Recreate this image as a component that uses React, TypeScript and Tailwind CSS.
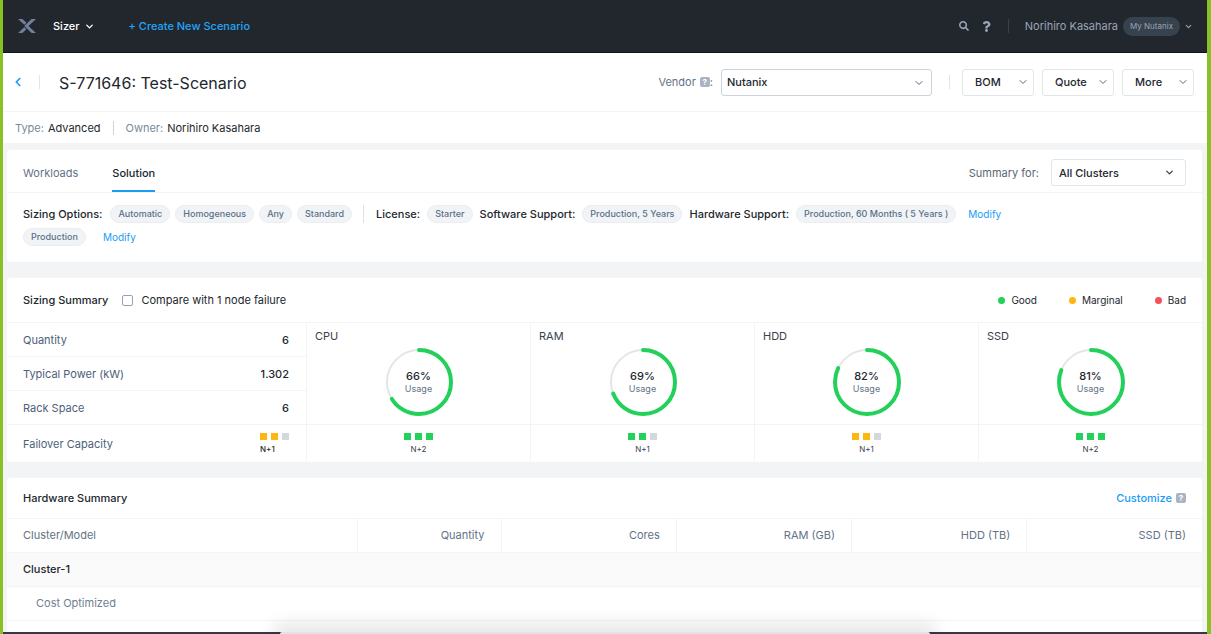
import { ChevronDown, ChevronLeft } from "lucide-react";
import { FaSearch, FaQuestion } from "react-icons/fa";

const colors = {
  good: "bg-[#22d05a]",
  marginal: "bg-[#ffb60f]",
  bad: "bg-[#f4505a]",
  off: "bg-[#d3d8de]",
};

type Level = keyof typeof colors;

const stats = [
  { label: "Quantity", value: "6" },
  { label: "Typical Power (kW)", value: "1.302" },
  { label: "Rack Space", value: "6" },
];

const gauges: { label: string; usage: number; level: Level; filled: number; failover: string }[] = [
  { label: "CPU", usage: 66, level: "good", filled: 3, failover: "N+2" },
  { label: "RAM", usage: 69, level: "good", filled: 2, failover: "N+1" },
  { label: "HDD", usage: 82, level: "marginal", filled: 2, failover: "N+1" },
  { label: "SSD", usage: 81, level: "good", filled: 3, failover: "N+2" },
];

const legend: { label: string; level: Level }[] = [
  { label: "Good", level: "good" },
  { label: "Marginal", level: "marginal" },
  { label: "Bad", level: "bad" },
];

const columns = ["Quantity", "Cores", "RAM (GB)", "HDD (TB)", "SSD (TB)"];

function Logo() {
  return (
    <svg width="18" height="14" viewBox="0 0 18 14" fill="#71819a" aria-hidden="true">
      <path d="M0 0h4.400l4 3.700-2.100 2z" />
      <path d="M18 0h-4.400L6.200 7l7.400 7H18l-7.500-7z" />
      <path d="M0 14h4.400l4-3.700-2.100-2z" />
    </svg>
  );
}

function HelpBadge() {
  return (
    <span className="inline-flex h-[10px] w-[10px] items-center justify-center rounded-xs bg-[#a9b4c2] text-[8px] font-bold leading-none text-white">
      ?
    </span>
  );
}

function Chip({ children }: { children: string }) {
  return (
    <span className="flex h-[18px] items-center whitespace-nowrap rounded-full border border-[#ebeef1] bg-[#f1f4f6] px-[7px] text-[9px] font-medium text-[#5c6f87]">
      {children}
    </span>
  );
}

function Blocks({ level, filled }: { level: Level; filled: number }) {
  return (
    <div className="flex gap-1">
      {[0, 1, 2].map((i) => (
        <span key={i} className={`h-[7px] w-[7px] ${i < filled ? colors[level] : colors.off}`} />
      ))}
    </div>
  );
}

function Gauge({ usage }: { usage: number }) {
  const r = 32;
  const length = 2 * Math.PI * r;
  return (
    <div className="relative h-[68px] w-[68px]">
      <svg viewBox="0 0 68 68" className="h-full w-full -rotate-90" fill="none" aria-hidden="true">
        <circle cx="34" cy="34" r={r} stroke="#e4e5e7" strokeWidth="2" />
        <circle
          cx="34"
          cy="34"
          r={r}
          stroke="#22d05a"
          strokeWidth="4"
          strokeLinecap="round"
          strokeDasharray={`${(length * usage) / 100} ${length}`}
        />
      </svg>
      <div className="absolute inset-0 flex flex-col items-center justify-center">
        <span className="text-[11px] font-medium leading-[14px] text-[#22272e]">{usage}%</span>
        <span className="text-[9px] leading-[12px] text-[#627386]">Usage</span>
      </div>
    </div>
  );
}

function MenuButton({ label }: { label: string }) {
  return (
    <button className="flex h-[27px] w-[72px] items-center justify-between rounded-[3px] border border-[#e2e5e8] pl-3 pr-1 text-[11px] font-medium">
      {label}
      <ChevronDown size={12} className="text-[#5b6673]" />
    </button>
  );
}

export default function App() {
  return (
    <div className="flex min-h-screen flex-col border-l-[3px] border-r-4 border-[#8ac122] bg-[#f2f4f6] font-['Inter',sans-serif] text-[11px] leading-4 text-[#22272e]">
      <header className="flex h-[53px] items-center border-b border-[#11151c] bg-[#22272e] pl-[15px] pr-[14px]">
        <Logo />
        <button className="ml-[17px] flex items-center gap-1 font-medium text-white">
          Sizer
          <ChevronDown size={11} strokeWidth={3} />
        </button>
        <a href="#new" className="ml-[34px] font-medium text-[#22a5f7]">
          + Create New Scenario
        </a>
        <div className="ml-auto flex items-center text-[#9aa5b5]">
          <button aria-label="Search">
            <FaSearch size={10} />
          </button>
          <button aria-label="Help" className="ml-3">
            <FaQuestion size={11} />
          </button>
          <span className="mx-4 h-[14px] w-px bg-[#3a414b]" />
          <span>Norihiro Kasahara</span>
          <span className="ml-[5px] flex h-[19px] items-center rounded-full bg-[#36424d] px-[7px] text-[8px]">My Nutanix</span>
          <button aria-label="Account menu" className="ml-1">
            <ChevronDown size={9} strokeWidth={3} />
          </button>
        </div>
      </header>

      <section className="bg-white">
        <div className="flex h-[59px] items-center border-b border-[#f2f4f6] pl-2 pr-[13px]">
          <button aria-label="Back" className="text-[#1b9cf5]">
            <ChevronLeft size={14} strokeWidth={3} />
          </button>
          <span className="ml-[14px] h-[14px] w-px bg-[#e2e5e8]" />
          <h1 className="ml-[19px] pt-[2px] text-[16px] leading-6">S-771646: Test-Scenario</h1>
          <div className="ml-auto flex items-center">
            <label htmlFor="vendor" className="flex items-center text-[#627386]">
              Vendor
              <span className="ml-1 flex items-center">
                <HelpBadge />:
              </span>
            </label>
            <div className="relative ml-2">
              <select id="vendor" className="h-[27px] w-[211px] appearance-none rounded-[3px] border border-[#cdd3dc] bg-white pl-[5px] font-medium">
                <option>Nutanix</option>
              </select>
              <ChevronDown size={12} className="pointer-events-none absolute right-[7px] top-2 text-[#5b6673]" />
            </div>
            <span className="ml-[17px] mr-3 h-[14px] w-px bg-[#e2e5e8]" />
            <div className="flex gap-2">
              <MenuButton label="BOM" />
              <MenuButton label="Quote" />
              <MenuButton label="More" />
            </div>
          </div>
        </div>
        <div className="flex h-[31px] items-center pl-3">
          <span className="text-[#7b899a]">Type:</span>
          <span className="ml-1">Advanced</span>
          <span className="mx-3 h-[14px] w-px bg-[#cdd3dc]" />
          <span className="text-[#7b899a]">Owner:</span>
          <span className="ml-1">Norihiro Kasahara</span>
        </div>
      </section>

      <main className="flex flex-1 flex-col gap-4 pl-1 pr-[5px] pt-[7px]">
        <section className="rounded-[3px] bg-white">
          <div className="flex h-[43px] items-stretch border-b border-[#f2f4f6] px-4">
            <nav className="flex gap-[34px]">
              <a href="#workloads" className="flex items-center border-b-2 border-transparent pt-[5px] text-[#627386]">
                Workloads
              </a>
              <a href="#solution" className="flex items-center border-b-2 border-[#1b9cf5] pt-[5px] font-medium">
                Solution
              </a>
            </nav>
            <div className="ml-auto flex items-center gap-3 pt-[3px]">
              <label htmlFor="clusters" className="text-[#5b6673]">
                Summary for:
              </label>
              <div className="relative">
                <select id="clusters" className="h-[27px] w-[135px] appearance-none rounded-[3px] border border-[#e2e5e8] bg-white pl-[7px] font-medium">
                  <option>All Clusters</option>
                </select>
                <ChevronDown size={11} strokeWidth={3} className="pointer-events-none absolute right-[11px] top-2 text-[#38414d]" />
              </div>
            </div>
          </div>
          <div className="flex items-start px-4 pb-4 pt-3">
            <div className="flex w-[340px] flex-wrap items-center gap-x-[5px] gap-y-[5px]">
              <span className="mr-[3px] font-medium">Sizing Options:</span>
              <Chip>Automatic</Chip>
              <Chip>Homogeneous</Chip>
              <Chip>Any</Chip>
              <Chip>Standard</Chip>
              <Chip>Production</Chip>
              <a href="#sizing" className="ml-3 text-[10px] text-[#1b9cf5]">
                Modify
              </a>
            </div>
            <div className="flex items-center border-l border-[#dde2e8] pl-3">
              <span className="font-medium">License:</span>
              <div className="mx-[7px]">
                <Chip>Starter</Chip>
              </div>
              <span className="font-medium">Software Support:</span>
              <div className="mx-[7px]">
                <Chip>Production, 5 Years</Chip>
              </div>
              <span className="font-medium">Hardware Support:</span>
              <div className="ml-[7px] mr-3">
                <Chip>Production, 60 Months ( 5 Years )</Chip>
              </div>
              <a href="#support" className="text-[10px] text-[#1b9cf5]">
                Modify
              </a>
            </div>
          </div>
        </section>

        <section className="rounded-[3px] bg-white">
          <div className="flex h-[45px] items-center border-b border-[#f2f4f6] px-4">
            <h2 className="font-medium">Sizing Summary</h2>
            <label className="ml-[14px] flex items-center gap-2">
              <input type="checkbox" className="h-[11px] w-[11px] appearance-none rounded-xs border border-[#94a3b5] bg-white" />
              Compare with 1 node failure
            </label>
            <ul className="ml-auto flex gap-8 text-[10px]">
              {legend.map((item) => (
                <li key={item.label} className="flex items-center gap-[6px]">
                  <span className={`h-[7px] w-[7px] rounded-full ${colors[item.level]}`} />
                  {item.label}
                </li>
              ))}
            </ul>
          </div>
          <div className="flex">
            <div className="flex w-[299px] shrink-0 flex-col">
              {stats.map((stat) => (
                <div key={stat.label} className="flex h-[34px] items-center justify-between border-b border-[#f2f4f6] pl-4 pr-[17px]">
                  <span className="text-[#4d6078]">{stat.label}</span>
                  <span className="font-medium">{stat.value}</span>
                </div>
              ))}
              <div className="flex h-[37px] items-center justify-between pl-4 pr-[17px]">
                <span className="text-[#4d6078]">Failover Capacity</span>
                <div>
                  <Blocks level="marginal" filled={2} />
                  <span className="mt-1 block text-[8px] font-medium leading-[10px]">N+1</span>
                </div>
              </div>
            </div>
            <div className="grid flex-1 grid-cols-4">
              {gauges.map((gauge) => (
                <div key={gauge.label} className="border-l border-[#f2f4f6]">
                  <div className="flex h-[102px] flex-col border-b border-[#f2f4f6] pt-[5px]">
                    <h3 className="ml-2 text-[#3a424d]">{gauge.label}</h3>
                    <div className="mt-1 flex justify-center">
                      <Gauge usage={gauge.usage} />
                    </div>
                  </div>
                  <div className="flex h-[37px] flex-col items-center justify-center">
                    <Blocks level={gauge.level} filled={gauge.filled} />
                    <span className="mt-1 text-[8px] leading-[10px] text-[#3a424d]">{gauge.failover}</span>
                  </div>
                </div>
              ))}
            </div>
          </div>
        </section>

        <section className="flex-1 rounded-t-[3px] bg-white">
          <div className="flex h-[41px] items-center justify-between border-b border-[#f2f4f6] px-4">
            <h2 className="font-medium">Hardware Summary</h2>
            <div className="flex items-center gap-1">
              <a href="#customize" className="font-medium text-[#1b9cf5]">
                Customize
              </a>
              <HelpBadge />
            </div>
          </div>
          <table className="w-full table-fixed">
            <colgroup>
              <col className="w-[350px]" />
              <col className="w-[144px]" />
              <col />
              <col />
              <col />
              <col />
            </colgroup>
            <thead>
              <tr className="h-[33px] border-b border-[#f2f4f6] text-[#627386]">
                <th className="pl-4 text-left font-normal">Cluster/Model</th>
                {columns.map((column) => (
                  <th key={column} className="border-l border-[#f2f4f6] pr-4 text-right font-normal">
                    {column}
                  </th>
                ))}
              </tr>
            </thead>
            <tbody>
              <tr className="h-[34px] border-b border-[#f2f4f6] bg-[#fafafa]">
                <td className="pl-4 font-medium">Cluster-1</td>
                <td colSpan={5} />
              </tr>
              <tr className="h-[34px] border-b border-[#f2f4f6]">
                <td className="pl-[29px] text-[#6f8093]">Cost Optimized</td>
                <td colSpan={5} />
              </tr>
            </tbody>
          </table>
        </section>
      </main>

      <footer className="flex h-[2px] justify-center bg-[#3a3643]">
        <div className="w-[54%] rounded-t-[2px] bg-[#e3e3e3] shadow-[0_0_18px_6px_rgba(0,0,0,0.14)]" />
      </footer>
    </div>
  );
}
